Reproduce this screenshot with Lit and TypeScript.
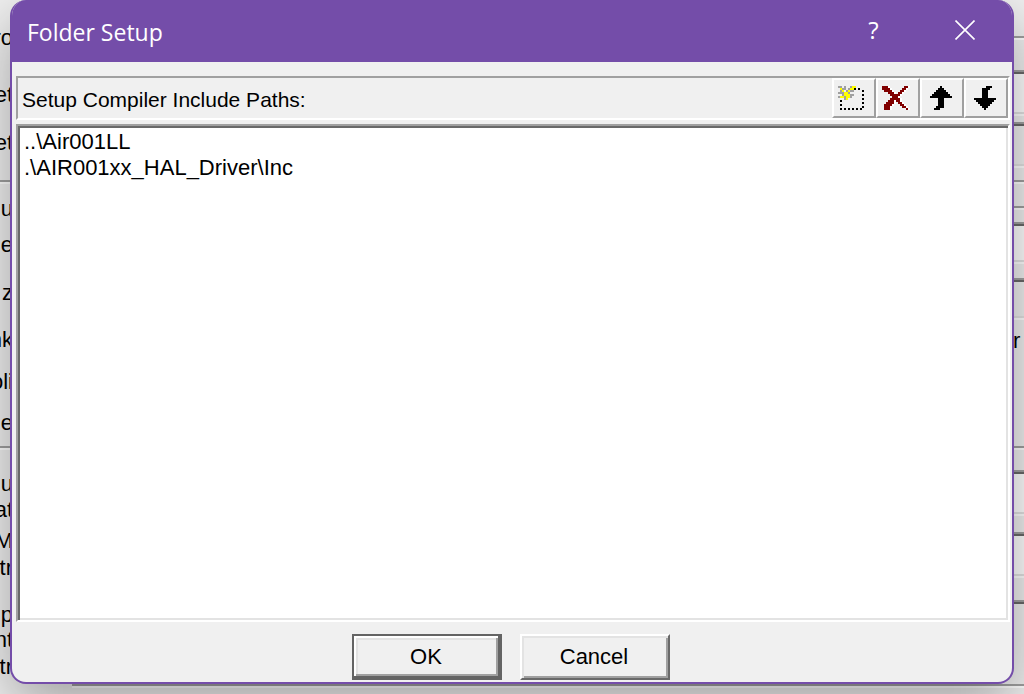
import { LitElement, html, css, svg } from "lit";
import { customElement, property, state } from "lit/decorators.js";

type Run = [row: number, from: number, to: number];

// Turns horizontal pixel runs into one path of unit-high bars.
const bars = (runs: Run[]) =>
  runs.map(([y, a, b]) => `M${a} ${y}h${b - a + 1}v1h-${b - a + 1}z`).join("");

const CROSS: Run[] = [
  [4, 3, 5], [4, 14, 15], [5, 3, 6], [5, 13, 14], [6, 4, 7], [6, 12, 13],
  [7, 6, 8], [7, 11, 12], [8, 7, 11], [9, 8, 10], [10, 7, 11],
  [11, 6, 8], [11, 10, 11], [12, 5, 8], [12, 11, 12], [13, 4, 7], [13, 12, 13],
  [14, 4, 6], [14, 13, 14], [15, 4, 6], [15, 15, 15],
];
const CROSS_LIGHT: Run[] = CROSS.map(([y, a, b]) => [y, a + 1, b + 1] as Run);

const UP: Run[] = [
  [4, 10, 10], [5, 9, 11], [6, 8, 12], [7, 7, 13], [8, 6, 14], [9, 5, 15],
  [10, 9, 11], [11, 9, 11], [12, 9, 11], [13, 9, 11], [14, 8, 11], [15, 7, 9],
];
const DOWN: Run[] = [
  [4, 11, 13], [5, 9, 12], [6, 9, 11], [7, 9, 11], [8, 9, 11], [9, 9, 11],
  [10, 5, 15], [11, 6, 14], [12, 7, 13], [13, 8, 12], [14, 9, 11], [15, 10, 10],
];

const MARQUEE: Run[] = [
  ...[11, 13].map((x) => [5, x, x] as Run),
  ...[6, 8, 10, 12, 14].map((y) => [y, 15, 15] as Run),
  ...[9, 11, 13].map((y) => [y, 4, 4] as Run),
  ...[4, 6, 8, 10, 12, 14].map((x) => [15, x, x] as Run),
];
const SPARK_GREY: Run[] = [
  [4, 3, 4], [4, 6, 6], [4, 9, 9], [5, 5, 6], [5, 8, 8], [6, 4, 4], [6, 7, 7], [6, 9, 10],
  [7, 3, 5], [7, 8, 8], [8, 5, 5], [8, 9, 10], [9, 3, 3], [9, 6, 6], [10, 6, 6], [9, 9, 9],
];
const SPARK_YELLOW: Run[] = [
  [4, 10, 11], [5, 4, 4], [5, 9, 10], [6, 5, 5], [6, 8, 8], [7, 6, 7],
  [8, 6, 8], [9, 4, 5], [9, 7, 8], [10, 7, 7],
];

const ICONS = {
  insert: svg`<path fill="#000" d=${bars(MARQUEE)} /><path fill="#a0a0a0" d=${bars(SPARK_GREY)} /><path fill="#ff0" d=${bars(SPARK_YELLOW)} />`,
  remove: svg`<path fill="#fff" d=${bars(CROSS_LIGHT)} /><path fill="#800000" d=${bars(CROSS)} />`,
  up: svg`<path fill="#000" d=${bars(UP)} />`,
  down: svg`<path fill="#000" d=${bars(DOWN)} />`,
};

@customElement("tool-button")
class ToolButton extends LitElement {
  @property() icon: keyof typeof ICONS = "up";
  @property() label = "";

  static styles = css`
    :host { display: block; }
    .tool {
      display: block;
      box-sizing: border-box;
      width: 44px;
      height: 40px;
      padding: 0;
      background: #f0f0f0;
      border: 2px solid;
      border-color: #fff #a0a0a0 #a0a0a0 #fff;
    }
    .glyph { display: block; width: 44px; height: 40px; margin: -2px; }
  `;

  render() {
    return html`<button class="tool" type="button" aria-label=${this.label}>
      <svg class="glyph" viewBox="0 0 22 20" shape-rendering="crispEdges">${ICONS[this.icon]}</svg>
    </button>`;
  }
}

// Labels of the options page behind the dialog: top of each line, visible end of the text.
// A line without text is a group border.
const BEHIND_TEXT: [number, string][] = [
  [25, "ro"], [82, "et"], [130, "et"], [180, ""], [196, "u"], [232, "e"], [280, "z"],
  [327, "nk"], [369, "oli"], [410, "ne"], [446, ""], [471, "u"], [497, "at"], [528, "M"],
  [555, "tr"], [602, "p"], [627, "nt"], [654, "tr"], [684, ""],
];

// Bands of the options page at the right: height and kind.
const BEHIND_BANDS: [number, string][] = [
  [36, "face"], [34, "groove"], [46, "field"], [6, "face"], [46, "field off"], [12, "face"],
  [26, "groove"], [16, "groove"], [42, "field"], [14, "face"], [42, "field off"],
  [8, "face"], [26, "caption"], [92, "face"], [24, "groove"], [46, "field"], [16, "face"],
  [46, "field"], [22, "face"], [4, "well"],
];

@customElement("app-root")
class AppRoot extends LitElement {
  @state() private paths = ["..\\Air001LL", ".\\AIR001xx_HAL_Driver\\Inc"];

  static styles = css`
    :host {
      display: grid;
      height: 100vh;
      overflow: hidden;
      background: #f0f0f0;
      color: #000;
      font: 22px/26px "Liberation Sans", Arial, sans-serif;
    }
    .behind, .dialog { grid-area: 1 / 1; min-width: 0; min-height: 0; }
    .behind {
      display: grid;
      grid-template: 1fr 10px / 13px 1fr 11px;
      overflow: hidden;
    }
    .left { grid-area: 1 / 1; min-height: 0; padding-top: 25px; }
    .scrap { box-sizing: border-box; display: flex; justify-content: flex-end; }
    .right { grid-area: 1 / 3; min-height: 0; }
    .sill { grid-area: 2 / 2 / 3 / 4; margin-left: 59px; }
    .band { box-sizing: border-box; }
    .groove { border-top: 2px solid #a0a0a0; box-shadow: inset 0 2px #fff; }
    .field {
      background: #fff;
      border-top: 2px solid #a0a0a0;
      border-bottom: 2px solid #fff;
      box-shadow: inset 0 2px #696969, inset 0 -2px #e3e3e3;
    }
    .off { background: #f0f0f0; }
    .well { border-top: 2px solid #a0a0a0; border-bottom: 2px solid #696969; }

    .dialog {
      display: flex;
      flex-direction: column;
      margin: 0 10px 10px;
      border: 2px solid #744da9;
      border-top: 0;
      border-radius: 16px;
      overflow: hidden;
      background: #f0f0f0;
      box-shadow: 0 20px 60px rgba(0, 0, 0, 0.34);
    }
    .titlebar {
      display: flex;
      height: 62px;
      padding: 0 2px 0 15px;
      background: #744da9;
      color: #fff;
    }
    .title {
      flex: 1;
      margin: 0;
      font: 400 23px/64px "Open Sans", "Noto Sans", sans-serif;
    }
    .caption-button {
      display: flex;
      align-items: center;
      justify-content: center;
      width: 91px;
      height: 60px;
      padding: 0;
      border: 0;
      background: none;
      color: #fff;
      font: 24px/60px "Open Sans", "Noto Sans", sans-serif;
    }
    .close { width: 20px; height: 20px; }
    .content {
      display: flex;
      flex: 1;
      flex-direction: column;
      gap: 4px;
      min-height: 0;
      padding: 14px 2px 0 4px;
    }
    .header {
      display: flex;
      align-items: center;
      border: 2px solid;
      border-color: #a0a0a0 #fff #fff #a0a0a0;
    }
    .label { flex: 1; padding: 4px 0 0 4px; font-size: 21px; }
    .tools { display: flex; }
    .list {
      box-sizing: border-box;
      flex: 1;
      width: 100%;
      min-height: 0;
      padding: 3px 2px;
      border: 2px solid;
      border-color: #a0a0a0 #fff #fff #a0a0a0;
      border-radius: 0;
      outline: 0;
      background: #fff;
      box-shadow: inset 2px 2px #696969, inset -2px -2px #e3e3e3;
      color: #000;
      font: inherit;
      overflow: hidden;
    }
    .path { min-height: 26px; padding: 0 4px; line-height: 26px; }
    .footer {
      display: flex;
      justify-content: center;
      gap: 18px;
      padding: 12px 2px 2px 0;
    }
    .push {
      box-sizing: border-box;
      width: 150px;
      height: 46px;
      padding: 0 2px 0 0;
      border: 2px solid;
      border-color: #fff #696969 #696969 #fff;
      background: #f0f0f0;
      box-shadow: inset 2px 2px #e3e3e3, inset -2px -2px #a0a0a0;
      color: #000;
      font: inherit;
    }
    .default {
      border-color: #646464;
      box-shadow: inset -2px -2px #646464, inset 2px 2px #fff,
        inset -4px -4px #a0a0a0, inset 4px 4px #e3e3e3;
    }
  `;

  render() {
    return html`
      <div class="behind" aria-hidden="true">
        <div class="left">
          ${BEHIND_TEXT.slice(0, -1).map(
            ([top, text], i) =>
              html`<div
                class="scrap ${text ? "" : "groove"}"
                style="height:${BEHIND_TEXT[i + 1][0] - top}px"
              >${text}</div>`
          )}
        </div>
        <div class="right">
          ${BEHIND_BANDS.map(
            ([height, kind]) =>
              html`<div class="band ${kind}" style="height:${height}px">${kind === "caption" ? "r" : ""}</div>`
          )}
        </div>
        <div class="sill groove"></div>
      </div>
      <section class="dialog" role="dialog" aria-labelledby="title">
        <header class="titlebar">
          <h1 class="title" id="title">Folder Setup</h1>
          <button class="caption-button" type="button">?</button>
          <button class="caption-button" type="button" aria-label="Close">
            <svg class="close" viewBox="0 0 20 20" fill="none" stroke="#fff" stroke-width="1.6">
              <path d="M0.5 0.5L19.5 19.5M19.5 0.5L0.5 19.5" />
            </svg>
          </button>
        </header>
        <div class="content">
          <div class="header">
            <label class="label" for="paths">Setup Compiler Include Paths:</label>
            <div class="tools">
              <tool-button icon="insert" label="New"></tool-button>
              <tool-button icon="remove" label="Delete"></tool-button>
              <tool-button icon="up" label="Move up"></tool-button>
              <tool-button icon="down" label="Move down"></tool-button>
            </div>
          </div>
          <select class="list" id="paths" size="8">
            ${this.paths.map((p) => html`<option class="path">${p}</option>`)}
          </select>
        </div>
        <footer class="footer">
          <button class="push default" type="button">OK</button>
          <button class="push" type="button">Cancel</button>
        </footer>
      </section>
    `;
  }
}
